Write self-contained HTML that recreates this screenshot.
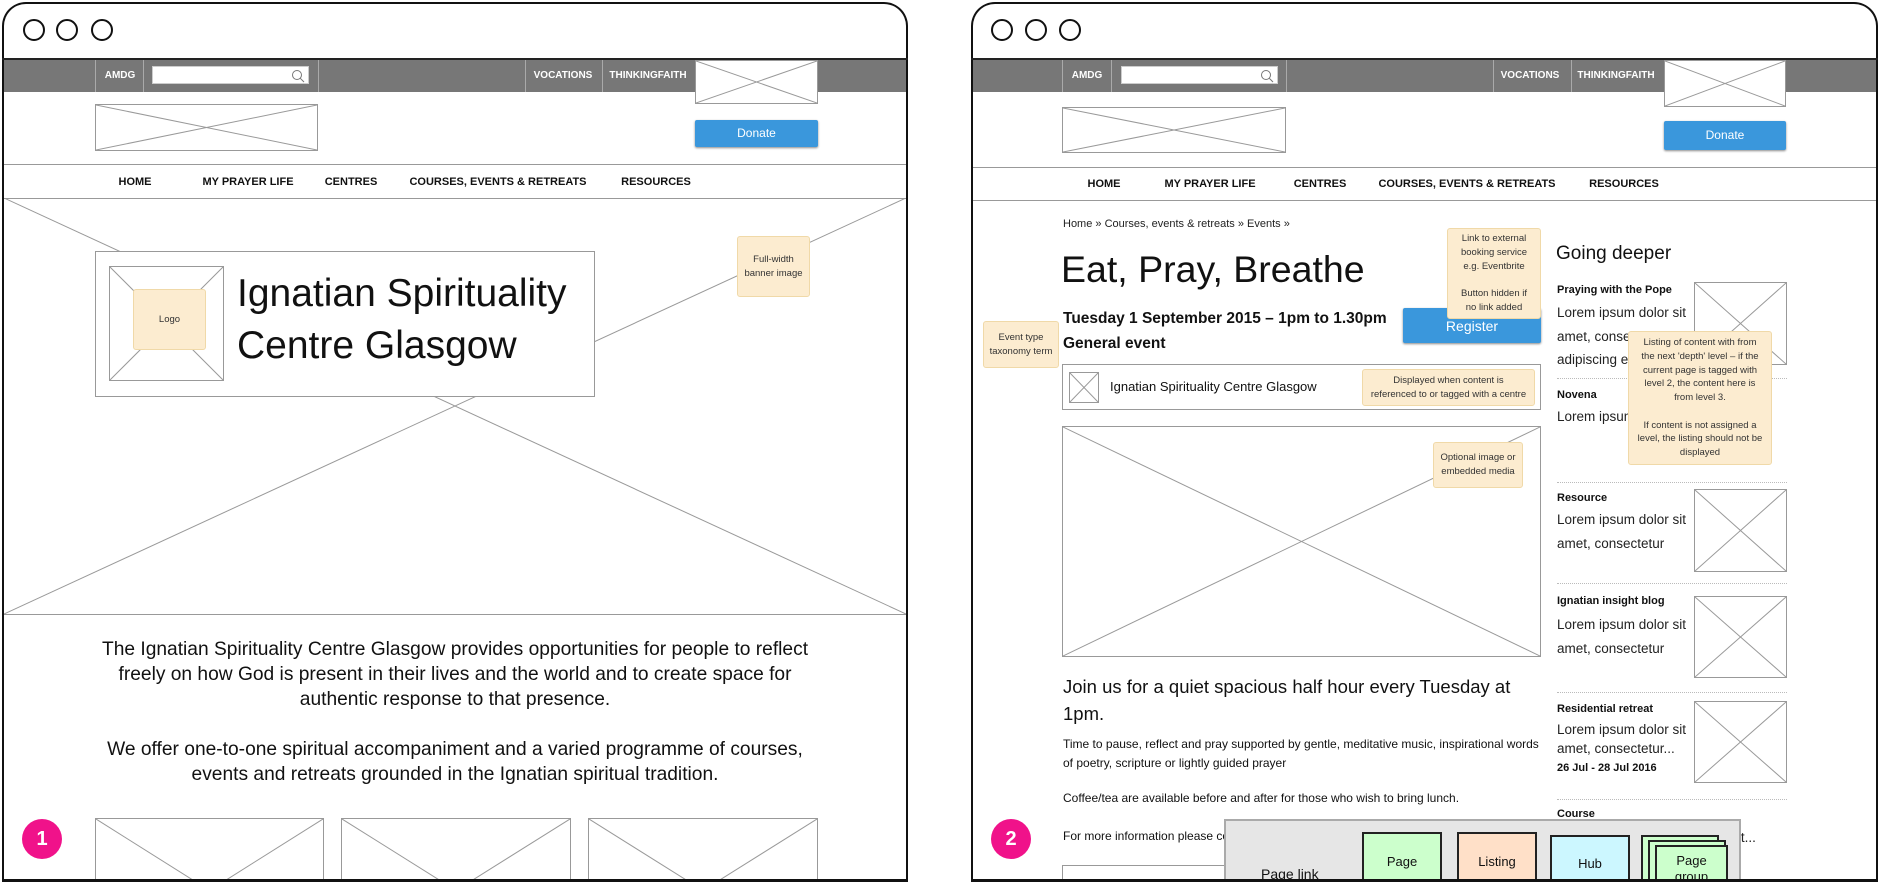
<!DOCTYPE html>
<html><head><meta charset="utf-8">
<style>
*{margin:0;padding:0;box-sizing:border-box}
html,body{width:1880px;height:882px;overflow:hidden}
body{background:#fff;position:relative;font-family:"Liberation Sans",sans-serif;color:#111}
.a{position:absolute}
.frame{position:absolute;border:2px solid #111;border-radius:24px 24px 0 0;background:#fff}
.clip{position:absolute;overflow:hidden}
.circ{position:absolute;width:22px;height:22px;border:2px solid #111;border-radius:50%}
.bar{position:absolute;background:#777;height:32px}
.div{position:absolute;top:0;height:32px;width:1px;background:#aaa}
.tb{position:absolute;color:#fff;font-size:10px;font-weight:bold;top:10px;transform:translateX(-50%);white-space:nowrap}
.xb{position:absolute;border:1px solid #999;background:#fff}
.xb svg{position:absolute;left:0;top:0;width:100%;height:100%}
.btn{position:absolute;background:#3a97dc;color:#fff;font-size:12px;text-align:center;border-radius:2px;box-shadow:0 1px 2px #888}
.hl{position:absolute;height:1px;background:#999}
.nav{position:absolute;font-size:11px;font-weight:bold;transform:translateX(-50%);white-space:nowrap}
.note{position:absolute;background:#fcecd0;border:1px solid #f0d9a8;border-radius:3px;font-size:9.5px;color:#333;text-align:center;display:flex;align-items:center;justify-content:center;line-height:1.45}
.pink{position:absolute;width:40px;height:40px;border-radius:50%;background:#f0128a;color:#fff;font-weight:bold;font-size:20px;text-align:center;line-height:40px}
.sep{position:absolute;height:0;border-top:1px dotted #bbb}
.sh{position:absolute;font-size:11px;font-weight:bold;line-height:14px}
.sl{position:absolute;font-size:13.5px;line-height:23.5px;color:#222}
.lg{position:absolute;border:2px solid #222;font-size:13px;text-align:center}
.srch{position:absolute;top:6px;width:157px;height:18px;background:#fff;border:1px solid #ccc}
</style></head><body>

<!-- LEFT FRAME -->
<div class="frame" style="left:2px;top:2px;width:906px;height:880px;border-bottom:none"></div>
<div class="circ" style="left:23px;top:19px"></div>
<div class="circ" style="left:56px;top:19px"></div>
<div class="circ" style="left:91px;top:19px"></div>
<div class="a" style="left:2px;top:58px;width:906px;height:2px;background:#222"></div>
<div class="bar" style="left:4px;top:60px;width:902px"></div>
<div class="a" style="left:4px;top:60px;width:902px;height:32px">
 <div class="div" style="left:91px"></div><div class="div" style="left:139px"></div><div class="div" style="left:314px"></div><div class="div" style="left:521px"></div><div class="div" style="left:598px"></div>
 <div class="tb" style="left:116px">AMDG</div>
 <div class="srch" style="left:148px"><svg class="a" style="right:3px;top:2px" width="14" height="14"><circle cx="6" cy="6" r="4.5" fill="none" stroke="#777"/><line x1="9.3" y1="9.3" x2="13" y2="13" stroke="#777"/></svg></div>
 <div class="tb" style="left:559px">VOCATIONS</div>
 <div class="tb" style="left:644px">THINKINGFAITH</div>
</div>
<div class="xb" style="left:695px;top:60px;width:123px;height:44px"><svg viewBox="0 0 100 100" preserveAspectRatio="none"><line x1="0" y1="0" x2="100" y2="100" stroke="#999" vector-effect="non-scaling-stroke"/><line x1="100" y1="0" x2="0" y2="100" stroke="#999" vector-effect="non-scaling-stroke"/></svg></div>
<div class="xb" style="left:95px;top:104px;width:223px;height:47px"><svg viewBox="0 0 100 100" preserveAspectRatio="none"><line x1="0" y1="0" x2="100" y2="100" stroke="#999" vector-effect="non-scaling-stroke"/><line x1="100" y1="0" x2="0" y2="100" stroke="#999" vector-effect="non-scaling-stroke"/></svg></div>
<div class="btn" style="left:695px;top:120px;width:123px;height:27px;line-height:27px">Donate</div>
<div class="hl" style="left:4px;top:164px;width:902px"></div>
<div class="nav" style="left:135px;top:176px">HOME</div>
<div class="nav" style="left:248px;top:176px">MY PRAYER LIFE</div>
<div class="nav" style="left:351px;top:176px">CENTRES</div>
<div class="nav" style="left:498px;top:176px">COURSES, EVENTS &amp; RETREATS</div>
<div class="nav" style="left:656px;top:176px">RESOURCES</div>
<div class="hl" style="left:4px;top:198px;width:902px"></div>
<svg class="a" style="left:4px;top:198px" width="902" height="416"><line x1="0" y1="0" x2="902" y2="416" stroke="#999"/><line x1="902" y1="0" x2="0" y2="416" stroke="#999"/></svg>
<div class="hl" style="left:4px;top:614px;width:902px"></div>
<div class="a" style="left:95px;top:251px;width:500px;height:146px;background:#fff;border:1px solid #999"></div>
<div class="xb" style="left:109px;top:266px;width:115px;height:115px"><svg viewBox="0 0 100 100" preserveAspectRatio="none"><line x1="0" y1="0" x2="100" y2="100" stroke="#999" vector-effect="non-scaling-stroke"/><line x1="100" y1="0" x2="0" y2="100" stroke="#999" vector-effect="non-scaling-stroke"/></svg></div>
<div class="note" style="left:133px;top:289px;width:73px;height:61px">Logo</div>
<div class="a" style="left:237px;top:268px;font-size:39px;line-height:52px">Ignatian Spirituality<br>Centre Glasgow</div>
<div class="note" style="left:737px;top:236px;width:73px;height:61px">Full-width<br>banner image</div>
<div class="a" style="left:4px;top:637px;width:902px;text-align:center;font-size:19.2px;line-height:25px">The Ignatian Spirituality Centre Glasgow provides opportunities for people to reflect<br>freely on how God is present in their lives and the world and to create space for<br>authentic response to that presence.<br><br>We offer one-to-one spiritual accompaniment and a varied programme of courses,<br>events and retreats grounded in the Ignatian spiritual tradition.</div>
<div class="clip" style="left:0;top:0;width:910px;height:879px">
<div class="xb" style="left:95px;top:818px;width:229px;height:145px"><svg viewBox="0 0 100 100" preserveAspectRatio="none"><line x1="0" y1="0" x2="100" y2="100" stroke="#999" vector-effect="non-scaling-stroke"/><line x1="100" y1="0" x2="0" y2="100" stroke="#999" vector-effect="non-scaling-stroke"/></svg></div>
<div class="xb" style="left:341px;top:818px;width:230px;height:145px"><svg viewBox="0 0 100 100" preserveAspectRatio="none"><line x1="0" y1="0" x2="100" y2="100" stroke="#999" vector-effect="non-scaling-stroke"/><line x1="100" y1="0" x2="0" y2="100" stroke="#999" vector-effect="non-scaling-stroke"/></svg></div>
<div class="xb" style="left:588px;top:818px;width:230px;height:145px"><svg viewBox="0 0 100 100" preserveAspectRatio="none"><line x1="0" y1="0" x2="100" y2="100" stroke="#999" vector-effect="non-scaling-stroke"/><line x1="100" y1="0" x2="0" y2="100" stroke="#999" vector-effect="non-scaling-stroke"/></svg></div>
</div>
<div class="a" style="left:2px;top:879px;width:906px;height:3px;background:#111"></div>
<div class="pink" style="left:22px;top:819px">1</div>

<!-- RIGHT FRAME -->
<div class="frame" style="left:971px;top:2px;width:907px;height:880px;border-bottom:none"></div>
<div class="circ" style="left:991px;top:19px"></div>
<div class="circ" style="left:1025px;top:19px"></div>
<div class="circ" style="left:1059px;top:19px"></div>
<div class="a" style="left:971px;top:58px;width:907px;height:2px;background:#222"></div>
<div class="bar" style="left:973px;top:60px;width:903px"></div>
<div class="a" style="left:973px;top:60px;width:903px;height:32px">
 <div class="div" style="left:89px"></div><div class="div" style="left:138px"></div><div class="div" style="left:313px"></div><div class="div" style="left:520px"></div><div class="div" style="left:598px"></div>
 <div class="tb" style="left:114px">AMDG</div>
 <div class="srch" style="left:148px"><svg class="a" style="right:3px;top:2px" width="14" height="14"><circle cx="6" cy="6" r="4.5" fill="none" stroke="#777"/><line x1="9.3" y1="9.3" x2="13" y2="13" stroke="#777"/></svg></div>
 <div class="tb" style="left:557px">VOCATIONS</div>
 <div class="tb" style="left:643px">THINKINGFAITH</div>
</div>
<div class="xb" style="left:1664px;top:60px;width:122px;height:47px"><svg viewBox="0 0 100 100" preserveAspectRatio="none"><line x1="0" y1="0" x2="100" y2="100" stroke="#999" vector-effect="non-scaling-stroke"/><line x1="100" y1="0" x2="0" y2="100" stroke="#999" vector-effect="non-scaling-stroke"/></svg></div>
<div class="xb" style="left:1062px;top:107px;width:224px;height:46px"><svg viewBox="0 0 100 100" preserveAspectRatio="none"><line x1="0" y1="0" x2="100" y2="100" stroke="#999" vector-effect="non-scaling-stroke"/><line x1="100" y1="0" x2="0" y2="100" stroke="#999" vector-effect="non-scaling-stroke"/></svg></div>
<div class="btn" style="left:1664px;top:121px;width:122px;height:29px;line-height:29px">Donate</div>
<div class="hl" style="left:973px;top:167px;width:903px"></div>
<div class="nav" style="left:1104px;top:178px">HOME</div>
<div class="nav" style="left:1210px;top:178px">MY PRAYER LIFE</div>
<div class="nav" style="left:1320px;top:178px">CENTRES</div>
<div class="nav" style="left:1467px;top:178px">COURSES, EVENTS &amp; RETREATS</div>
<div class="nav" style="left:1624px;top:178px">RESOURCES</div>
<div class="hl" style="left:973px;top:200px;width:903px"></div>

<div class="a" style="left:1063px;top:218px;font-size:11px;color:#222">Home » Courses, events &amp; retreats » Events »</div>
<div class="a" style="left:1061px;top:246px;font-size:37.5px;line-height:46px">Eat, Pray, Breathe</div>
<div class="a" style="left:1063px;top:309px;font-size:15.5px;font-weight:bold;line-height:20px;white-space:nowrap">Tuesday 1 September 2015 – 1pm to 1.30pm</div>
<div class="a" style="left:1063px;top:334px;font-size:15.5px;font-weight:bold;line-height:20px">General event</div>
<div class="btn" style="left:1403px;top:308px;width:138px;height:35px;line-height:36px;font-size:14px">Register</div>
<div class="note" style="left:1447px;top:228px;width:94px;height:91px">Link to external<br>booking service<br>e.g. Eventbrite<br><br>Button hidden if<br>no link added</div>
<div class="note" style="left:983px;top:321px;width:76px;height:47px">Event type<br>taxonomy term</div>
<div class="a" style="left:1062px;top:364px;width:479px;height:46px;border:1px solid #999"></div>
<div class="xb" style="left:1069px;top:372px;width:30px;height:31px"><svg viewBox="0 0 100 100" preserveAspectRatio="none"><line x1="0" y1="0" x2="100" y2="100" stroke="#999" vector-effect="non-scaling-stroke"/><line x1="100" y1="0" x2="0" y2="100" stroke="#999" vector-effect="non-scaling-stroke"/></svg></div>
<div class="a" style="left:1110px;top:379px;font-size:13px">Ignatian Spirituality Centre Glasgow</div>
<div class="note" style="left:1362px;top:369px;width:173px;height:37px">Displayed when content is<br>referenced to or tagged with a centre</div>
<div class="xb" style="left:1062px;top:426px;width:479px;height:231px"><svg viewBox="0 0 100 100" preserveAspectRatio="none"><line x1="0" y1="0" x2="100" y2="100" stroke="#999" vector-effect="non-scaling-stroke"/><line x1="100" y1="0" x2="0" y2="100" stroke="#999" vector-effect="non-scaling-stroke"/></svg></div>
<div class="note" style="left:1433px;top:442px;width:90px;height:46px">Optional image or<br>embedded media</div>
<div class="a" style="left:1063px;top:673px;font-size:18.5px;line-height:27px;width:485px">Join us for a quiet spacious half hour every Tuesday at 1pm.</div>
<div class="a" style="left:1063px;top:735px;font-size:12px;line-height:19px;width:485px">Time to pause, reflect and pray supported by gentle, meditative music, inspirational words of poetry, scripture or lightly guided prayer</div>
<div class="a" style="left:1063px;top:791px;font-size:12px">Coffee/tea are available before and after for those who wish to bring lunch.</div>
<div class="a" style="left:1063px;top:829px;font-size:12px;white-space:nowrap">For more information please contact us</div>
<div class="a" style="left:1062px;top:865px;width:170px;height:17px;border:1px solid #999;border-bottom:none"></div>

<div class="a" style="left:1556px;top:243px;font-size:19px">Going deeper</div>
<div class="sh" style="left:1557px;top:283px">Praying with the Pope</div>
<div class="sl" style="left:1557px;top:301px">Lorem ipsum dolor sit<br>amet, consectetur<br>adipiscing elit...</div>
<div class="xb" style="left:1694px;top:282px;width:93px;height:83px"><svg viewBox="0 0 100 100" preserveAspectRatio="none"><line x1="0" y1="0" x2="100" y2="100" stroke="#999" vector-effect="non-scaling-stroke"/><line x1="100" y1="0" x2="0" y2="100" stroke="#999" vector-effect="non-scaling-stroke"/></svg></div>
<div class="sep" style="left:1557px;top:378px;width:230px"></div>
<div class="sh" style="left:1557px;top:388px">Novena</div>
<div class="sl" style="left:1557px;top:405px">Lorem ipsum dolor sit amet, elit...</div>
<div class="sep" style="left:1557px;top:482px;width:230px"></div>
<div class="sh" style="left:1557px;top:491px">Resource</div>
<div class="sl" style="left:1557px;top:508px">Lorem ipsum dolor sit<br>amet, consectetur</div>
<div class="xb" style="left:1694px;top:489px;width:93px;height:83px"><svg viewBox="0 0 100 100" preserveAspectRatio="none"><line x1="0" y1="0" x2="100" y2="100" stroke="#999" vector-effect="non-scaling-stroke"/><line x1="100" y1="0" x2="0" y2="100" stroke="#999" vector-effect="non-scaling-stroke"/></svg></div>
<div class="sep" style="left:1557px;top:583px;width:230px"></div>
<div class="sh" style="left:1557px;top:594px">Ignatian insight blog</div>
<div class="sl" style="left:1557px;top:613px">Lorem ipsum dolor sit<br>amet, consectetur</div>
<div class="xb" style="left:1694px;top:596px;width:93px;height:82px"><svg viewBox="0 0 100 100" preserveAspectRatio="none"><line x1="0" y1="0" x2="100" y2="100" stroke="#999" vector-effect="non-scaling-stroke"/><line x1="100" y1="0" x2="0" y2="100" stroke="#999" vector-effect="non-scaling-stroke"/></svg></div>
<div class="sep" style="left:1557px;top:692px;width:230px"></div>
<div class="sh" style="left:1557px;top:702px">Residential retreat</div>
<div class="sl" style="left:1557px;top:720px;line-height:19px">Lorem ipsum dolor sit<br>amet, consectetur...</div>
<div class="sh" style="left:1557px;top:761px">26 Jul - 28 Jul 2016</div>
<div class="xb" style="left:1694px;top:701px;width:93px;height:82px"><svg viewBox="0 0 100 100" preserveAspectRatio="none"><line x1="0" y1="0" x2="100" y2="100" stroke="#999" vector-effect="non-scaling-stroke"/><line x1="100" y1="0" x2="0" y2="100" stroke="#999" vector-effect="non-scaling-stroke"/></svg></div>
<div class="sep" style="left:1557px;top:799px;width:230px"></div>
<div class="sh" style="left:1557px;top:807px">Course</div>
<div class="sl" style="left:1557px;top:826px">Lorem ipsum dolor sit amet, elit...</div>

<div class="note" style="left:1628px;top:331px;width:144px;height:134px">Listing of content with from<br>the next 'depth' level – if the<br>current page is tagged with<br>level 2, the content here is<br>from level 3.<br><br>If content is not assigned a<br>level, the listing should not be<br>displayed</div>

<!-- legend -->
<div class="clip" style="left:1220px;top:815px;width:530px;height:64px">
<div class="a" style="left:4px;top:4px;width:517px;height:70px;background:#e6e6e6;border:2px solid #aaa"></div>
<div class="a" style="left:41px;top:51px;font-size:14px">Page link</div>
<div class="lg" style="left:142px;top:17px;width:80px;height:60px;background:#ccffcc;padding-top:20px">Page</div>
<div class="lg" style="left:237px;top:17px;width:80px;height:60px;background:#ffe0c8;padding-top:20px">Listing</div>
<div class="lg" style="left:330px;top:20px;width:80px;height:60px;background:#ccf7ff;padding-top:19px">Hub</div>
<div class="lg" style="left:421px;top:20px;width:78px;height:60px;background:#ccffcc"></div>
<div class="lg" style="left:428px;top:25px;width:78px;height:60px;background:#ccffcc"></div>
<div class="lg" style="left:435px;top:30px;width:73px;height:60px;background:#ccffcc;padding-top:6px;line-height:16px">Page<br>group</div>
</div>
<div class="a" style="left:971px;top:879px;width:907px;height:3px;background:#111"></div>
<div class="pink" style="left:991px;top:819px">2</div>
</body></html>
